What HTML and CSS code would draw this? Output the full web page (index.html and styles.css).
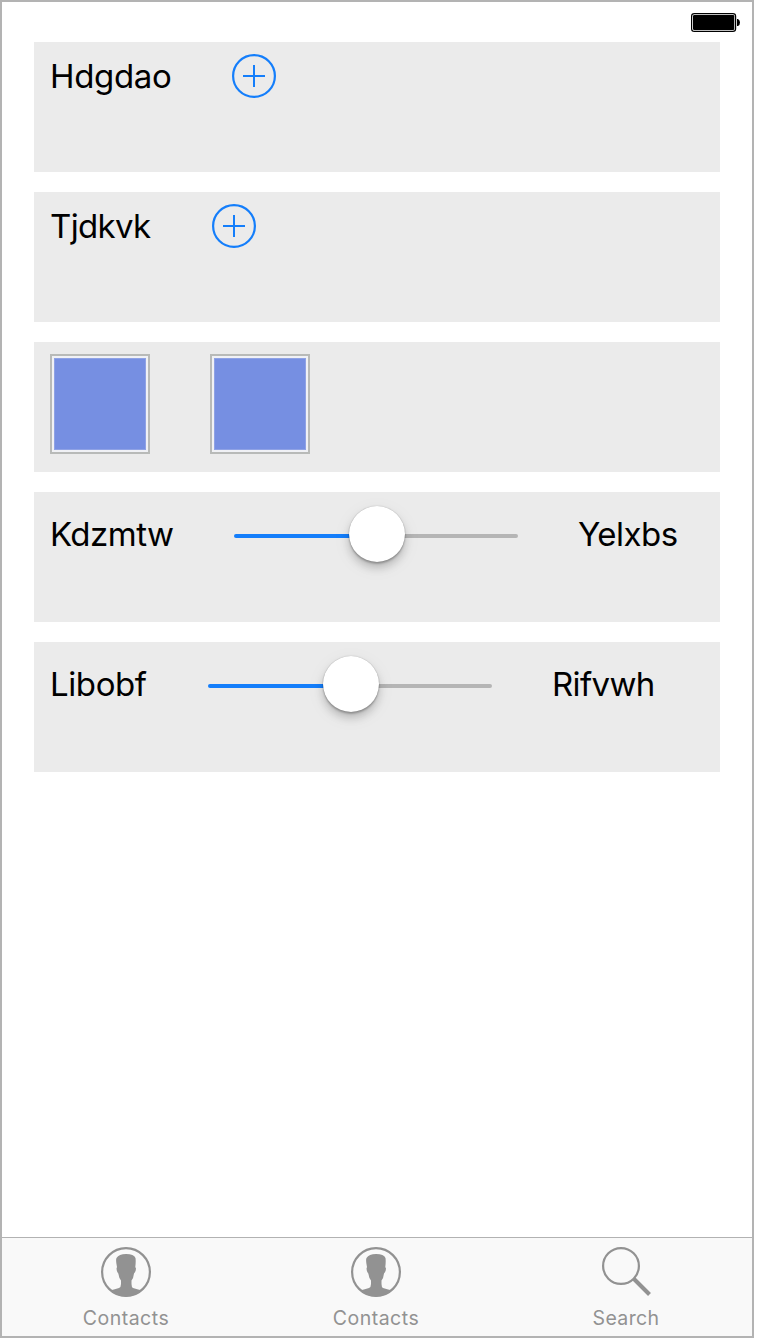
FILE: index.html
```html
<!DOCTYPE html>
<html lang="en">
<head>
<meta charset="utf-8">
<title>Contacts</title>
<link rel="stylesheet" href="styles.css">
</head>
<body>
<div class="screen">
  <header class="status-bar">
    <svg class="battery" width="50" height="20" viewBox="0 0 50 20">
      <rect x=".6" y=".6" width="44" height="17.8" rx="2.7" fill="none" stroke="#000" stroke-width="1.2"/>
      <rect x="2" y="2" width="41.3" height="15" rx="1.2"/>
      <path d="M46 6h1q2 1 2 3.500t-2 3.500h-1z"/>
    </svg>
  </header>
  <main class="rows">
    <section class="card">
      <span class="label label-a">Hdgdao</span>
      <svg class="add" width="44" height="44" viewBox="0 0 44 44"><circle cx="22" cy="22" r="20.900"/><path d="M22 11v22M11 22h22"/></svg>
    </section>
    <section class="card">
      <span class="label label-b">Tjdkvk</span>
      <svg class="add" width="44" height="44" viewBox="0 0 44 44"><circle cx="22" cy="22" r="20.900"/><path d="M22 11v22M11 22h22"/></svg>
    </section>
    <section class="card">
      <div class="swatch"><div class="fill"></div></div>
      <div class="swatch"><div class="fill"></div></div>
    </section>
    <section class="card slider-card">
      <span class="label label-c">Kdzmtw</span>
      <div class="slider"><div class="knob"></div></div>
      <span class="label label-d">Yelxbs</span>
    </section>
    <section class="card slider-card">
      <span class="label label-e">Libobf</span>
      <div class="slider"><div class="knob"></div></div>
      <span class="label label-f">Rifvwh</span>
    </section>
  </main>
  <nav class="tabs">
    <div class="tab">
      <svg width="50" height="50" viewBox="0 0 50 50"><circle class="ring" cx="25" cy="25" r="23.900"/><path class="person" d="M9 43.500Q14 42 18 41Q20 40 20 37V33.500Q18 31 17.300 26.500Q15.800 25 15.500 21.500L16 20Q14.500 13 15.500 11Q18 7 25 7Q33 7 34.500 11Q35 14 34.300 20L35 21.500Q34.700 25 33 26.500Q32.500 31 30.500 33.500V37Q30.500 40 32 41Q36 42 41 43.500Q34 49.500 25 49.500Q16 49.500 9 43.500Z"/></svg>
      <span class="caption caption-contacts">Contacts</span>
    </div>
    <div class="tab">
      <svg width="50" height="50" viewBox="0 0 50 50"><circle class="ring" cx="25" cy="25" r="23.900"/><path class="person" d="M9 43.500Q14 42 18 41Q20 40 20 37V33.500Q18 31 17.300 26.500Q15.800 25 15.500 21.500L16 20Q14.500 13 15.500 11Q18 7 25 7Q33 7 34.500 11Q35 14 34.300 20L35 21.500Q34.700 25 33 26.500Q32.500 31 30.500 33.500V37Q30.500 40 32 41Q36 42 41 43.500Q34 49.500 25 49.500Q16 49.500 9 43.500Z"/></svg>
      <span class="caption caption-contacts">Contacts</span>
    </div>
    <div class="tab">
      <svg width="50" height="50" viewBox="0 0 50 50"><circle class="ring" cx="20" cy="19" r="17.900"/><path class="handle" d="M32.500 31.500L48.500 47.500"/></svg>
      <span class="caption caption-search">Search</span>
    </div>
  </nav>
</div>
</body>
</html>
```
FILE: styles.css
```css
body {
  margin: 0;
  background: #fff;
  font-family: Inter, "Liberation Sans", sans-serif;
}
.screen {
  box-sizing: border-box;
  width: 754px;
  height: 1338px;
  border: 2px solid #b3b3b3;
  display: flex;
  flex-direction: column;
}
.status-bar {
  height: 29px;
  padding: 11px 11px 0 0;
  display: flex;
  justify-content: flex-end;
}
.rows {
  flex: 1;
  display: flex;
  flex-direction: column;
  gap: 20px;
  padding: 0 32px;
}
.card {
  box-sizing: border-box;
  height: 130px;
  padding: 12px 16px;
  display: flex;
  align-items: flex-start;
  gap: 60px;
  background: #ebebeb;
}
.label {
  flex: none;
  font-size: 33px;
  line-height: 44px;
  white-space: nowrap;
  color: #000;
}
.label-a { width: 122px; letter-spacing: -.35px; }
.label-b { width: 102px; letter-spacing: -.65px; }
.label-c { width: 124px; letter-spacing: -.5px; }
.label-d { letter-spacing: -.5px; }
.label-e { width: 98px; letter-spacing: -.4px; }
.label-f { letter-spacing: -.65px; }
.add {
  flex: none;
  fill: none;
  stroke: #147efb;
  stroke-width: 2.200;
}
.add path {
  stroke-width: 2;
}
.swatch {
  box-sizing: border-box;
  width: 100px;
  height: 100px;
  border: 2px solid #b8bab8;
  padding: 2px;
  background: #f0f1f5;
}
.fill {
  box-sizing: border-box;
  height: 92px;
  border: 1px solid #8fa2e5;
  background: #768fe2;
}
.slider-card {
  padding-top: 14px;
}
.slider-card .label {
  line-height: 56px;
}
.slider {
  flex: none;
  width: 284px;
  height: 4px;
  margin-top: 28px;
  border-radius: 2px;
  background: linear-gradient(to right, #147efb 50%, #b5b5b5 50%);
  display: flex;
  justify-content: center;
}
.knob {
  width: 56px;
  height: 56px;
  margin: -28px 0 0 2px;
  border-radius: 50%;
  background: #fff;
  box-shadow: 0 0 1px rgba(0, 0, 0, .35), 0 6px 8px rgba(0, 0, 0, .18), 0 2px 2px rgba(0, 0, 0, .22), 0 5px 20px rgba(0, 0, 0, .06);
}
.tabs {
  box-sizing: border-box;
  height: 99px;
  border-top: 1px solid #b2b2b2;
  background: #f9f9f9;
  display: grid;
  grid-template-columns: 250px 250px 250px;
}
.tab {
  display: flex;
  flex-direction: column;
  align-items: center;
  padding: 9px 2px 0 0;
  color: #929292;
}
.ring {
  fill: none;
  stroke: #929292;
  stroke-width: 2.200;
}
.person {
  fill: #929292;
}
.handle {
  fill: none;
  stroke: #929292;
  stroke-width: 4;
}
.caption {
  margin-top: 9px;
  font-size: 19.500px;
  line-height: 24px;
}
.caption-contacts { letter-spacing: .5px; }
.caption-search { letter-spacing: .35px; }
```
